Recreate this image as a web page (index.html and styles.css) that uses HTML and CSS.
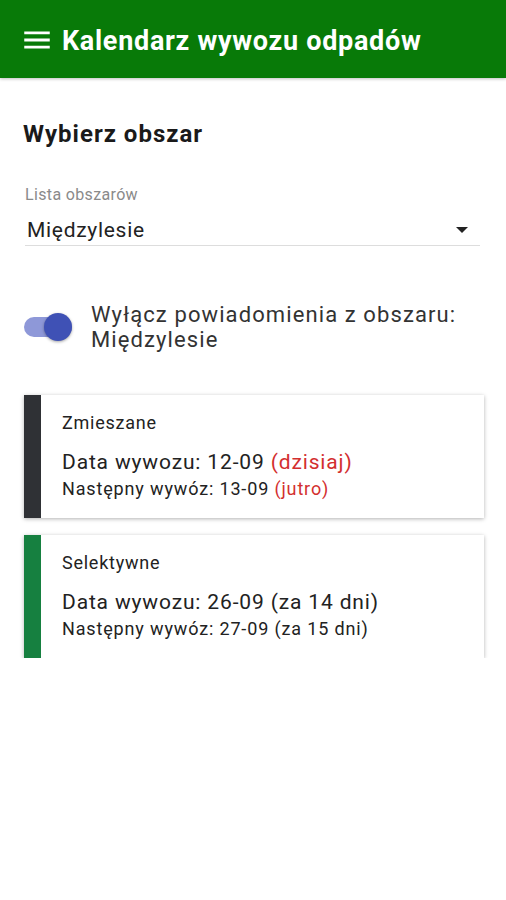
FILE: index.html
```html
<!DOCTYPE html>
<html lang="pl">
<head>
    <meta charset="UTF-8">
    <meta name="viewport" content="width=device-width, initial-scale=1.0">
    <title>Kalendarz wywozu odpadów</title>
    <link rel="stylesheet" href="styles.css">
</head>
<body>
    <header class="app-bar">
        <svg class="menu-icon" width="34" height="34" viewBox="0 0 24 24">
            <path d="M3 6h18v2H3zM3 11h18v2H3zM3 16h18v2H3z" fill="#fff"/>
        </svg>
        <h1>Kalendarz wywozu odpadów</h1>
    </header>

    <main class="content">
        <h2>Wybierz obszar</h2>

        <div class="select-field">
            <div class="select-label">Lista obszarów</div>
            <div class="select-value">
                <span>Międzylesie</span>
                <svg width="12" height="6" viewBox="0 0 12 6"><path d="M0 0h12L6 6z" fill="#222"/></svg>
            </div>
        </div>

        <div class="switch-row">
            <div class="switch">
                <div class="switch-track"></div>
                <div class="switch-thumb"></div>
            </div>
            <div class="switch-text">Wyłącz powiadomienia z obszaru:<br>Międzylesie</div>
        </div>

        <div class="card">
            <div class="card-bar mixed"></div>
            <div class="card-body">
                <div class="card-type">Zmieszane</div>
                <div class="card-date">Data wywozu: 12-09 <span class="soon">(dzisiaj)</span></div>
                <div class="card-next">Następny wywóz: 13-09 <span class="soon">(jutro)</span></div>
            </div>
        </div>

        <div class="card">
            <div class="card-bar selective"></div>
            <div class="card-body">
                <div class="card-type">Selektywne</div>
                <div class="card-date">Data wywozu: 26-09 (za 14 dni)</div>
                <div class="card-next">Następny wywóz: 27-09 (za 15 dni)</div>
            </div>
        </div>
    </main>
</body>
</html>
```

FILE: styles.css
```css
body {
    margin: 0;
    font-family: Roboto, 'Noto Sans', sans-serif;
    background-color: #fff;
    color: #222;
}

.app-bar {
    height: 78px;
    background-color: #087a08;
    display: flex;
    align-items: center;
    padding-left: 20px;
    box-shadow: 0 1px 3px rgba(0, 0, 0, 0.25);
}

.menu-icon {
    margin-right: 8px;
    margin-top: 2px;
}

.app-bar h1 {
    margin: 4px 0 0 0;
    font-size: 27px;
    letter-spacing: 0.7px;
    font-weight: 700;
    color: #fff;
}

.content {
    padding: 0 26px 0 23px;
}

h2 {
    margin: 42px 0 0 0;
    font-size: 24px;
    letter-spacing: 1px;
    font-weight: 700;
    color: #1a1a1a;
}

.select-field {
    margin-top: 37px;
    padding-left: 2px;
}

.select-label {
    font-size: 16px;
    letter-spacing: 0.35px;
    color: #8a8a8a;
}

.select-value {
    display: flex;
    align-items: center;
    justify-content: space-between;
    font-size: 21px;
    letter-spacing: 0.7px;
    padding: 14px 12px 3px 2px;
    border-bottom: 1px solid #ddd;
}

.switch-row {
    display: flex;
    align-items: flex-start;
    margin-top: 56px;
}

.switch {
    position: relative;
    width: 50px;
    height: 30px;
    margin: 10px 17px 0 1px;
    flex-shrink: 0;
}

.switch-track {
    position: absolute;
    left: 0;
    top: 5px;
    width: 48px;
    height: 20px;
    border-radius: 10px;
    background-color: #8e98d8;
}

.switch-thumb {
    position: absolute;
    left: 20px;
    top: 1px;
    width: 28px;
    height: 28px;
    border-radius: 50%;
    background-color: #3f51b5;
    box-shadow: 0 1px 3px rgba(0, 0, 0, 0.35);
}

.switch-text {
    font-size: 22px;
    letter-spacing: 1.1px;
    line-height: 25px;
    color: #333;
}

.card {
    display: flex;
    margin-top: 17px;
    margin-right: -4px;
    margin-left: 1px;
    height: 123px;
    background-color: #fff;
    box-shadow: 0 1px 4px rgba(0, 0, 0, 0.3);
}

.switch-row + .card {
    margin-top: 43px;
}

.card-bar {
    width: 17px;
    flex-shrink: 0;
}

.card-bar.mixed {
    background-color: #2f3135;
}

.card-bar.selective {
    background-color: #168040;
}

.card-body {
    padding: 17px 0 0 21px;
    color: #222;
}

.card-type {
    font-size: 18px;
    letter-spacing: 0.75px;
}

.card-date {
    margin-top: 17px;
    font-size: 21px;
    letter-spacing: 0.85px;
}

.card-next {
    margin-top: 4px;
    font-size: 18px;
    letter-spacing: 0.85px;
}

.soon {
    color: #d32f2f;
}
```
